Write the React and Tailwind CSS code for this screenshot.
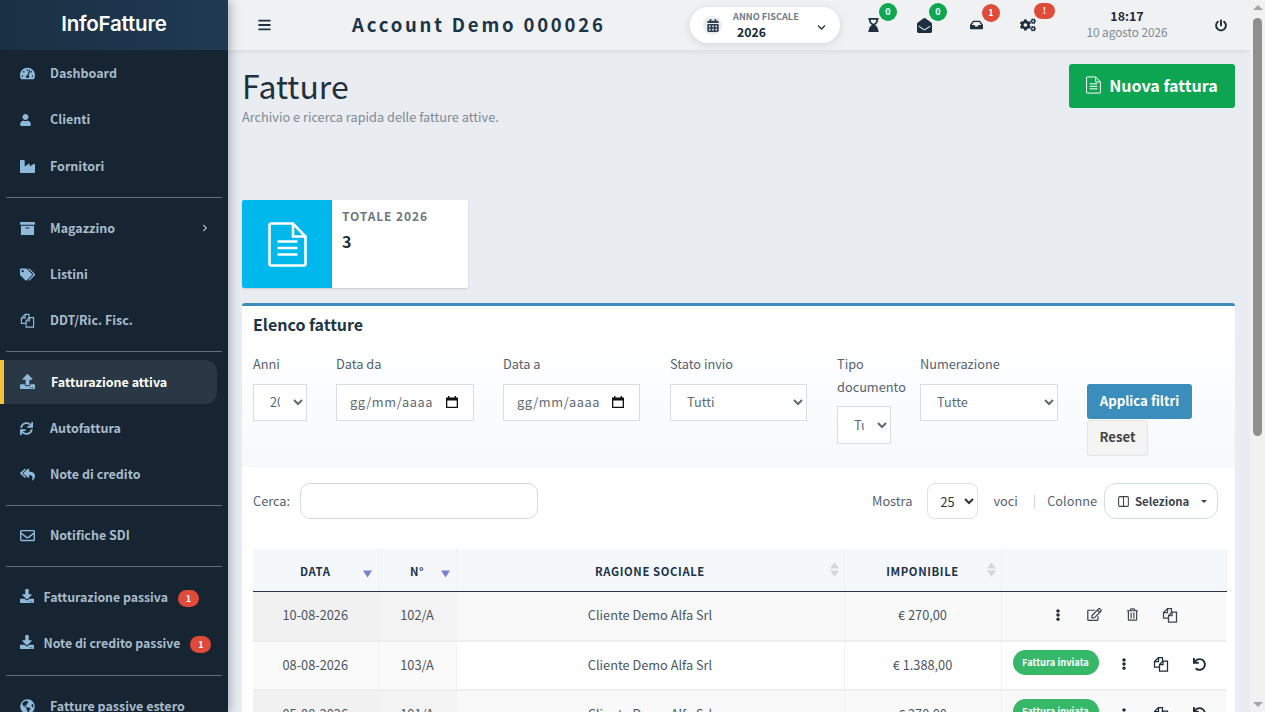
import {
  FaTachometerAlt, FaUser, FaIndustry, FaArchive, FaTags, FaUpload, FaSync, FaReplyAll, FaRegEnvelope,
  FaDownload, FaGlobeAmericas, FaBars, FaCalendarAlt, FaHourglassEnd, FaEnvelopeOpen, FaInbox, FaCogs,
  FaPowerOff, FaEllipsisV, FaRegEdit, FaRegTrashAlt, FaUndo, FaChevronDown, FaChevronRight,
} from "react-icons/fa";
import { Columns2 } from "lucide-react";

const FilesIcon = ({ className }) => (
  <svg viewBox="0 0 16 16" fill="none" stroke="currentColor" strokeWidth="1.25" className={className}>
    <path d="M6.5 11H1.5V5.5L5.5 1.5H9.5V5" />
    <path d="M5.5 1.5V5.5H1.5" />
    <path d="M10 5h4.5v10h-8V8.5L10 5z" />
    <path d="M10 5v3.5H6.5" />
  </svg>
);

const DocIcon = ({ className }) => (
  <svg viewBox="0 0 39 45" fill="none" stroke="currentColor" strokeWidth="2.6" className={className}>
    <path d="M3 1.5h22l12.5 13V42a1.5 1.5 0 0 1-1.5 1.5H3A1.5 1.5 0 0 1 1.5 42V3A1.5 1.5 0 0 1 3 1.5z" />
    <path d="M25 1.5V14.5H37.5" />
    <path d="M9.5 19.5h20M9.5 26h20M9.5 32.5h20" />
  </svg>
);

const CalendarIcon = () => (
  <svg viewBox="0 0 14 14" className="w-[14px] h-[14px] text-[#111]" fill="currentColor">
    <path d="M1 2.5h12V13H1V2.5zM2.3 5.5v6.2h9.4V5.5H2.3z" fillRule="evenodd" />
    <rect x="3" y="1" width="1.4" height="2" />
    <rect x="9.6" y="1" width="1.4" height="2" />
  </svg>
);

const SortDown = () => (
  <svg viewBox="0 0 10 8" className="absolute right-[6px] top-[21px] w-[9px] h-[8px] text-[#7b7fd6]" fill="currentColor">
    <path d="M0 0h10L5 8z" />
  </svg>
);

const SortBoth = () => (
  <svg viewBox="0 0 10 16" className="absolute right-[5px] top-[13px] w-[9px] h-[15px] text-[#d3d7db]" fill="currentColor">
    <path d="M5 0l5 7H0zM0 9h10l-5 7z" />
  </svg>
);

const Divider = () => <div className="h-px bg-[#5f7080] mx-[6px] my-[7.5px]" />;

const NavItem = ({ icon: Icon, label, chevron, iconClass = "w-[15px] h-[15px]", className = "" }) => (
  <div className={`h-[46.25px] flex items-center pl-5 pr-[19px] text-[#a8bccb] font-bold text-[12.5px] ${className}`}>
    <span className="w-[15px] shrink-0 flex">
      <Icon className={`${iconClass} text-[#8db9da]`} />
    </span>
    <span className="ml-[15px] flex-1 whitespace-nowrap">{label}</span>
    {chevron && <FaChevronRight className="w-[8px] h-[8px] text-[#a9bccb]" />}
  </div>
);

const BadgeItem = ({ label }) => (
  <div className="h-[46.25px] flex items-center pl-5 text-[#a8bccb] font-bold text-[12.3px]">
    <FaDownload className="w-[14px] h-[14px] text-[#8db9da] shrink-0 -mt-1" />
    <span className="ml-[9.5px] whitespace-nowrap pb-[2px]">{label}</span>
    <span className="ml-[10px] w-[21px] h-[17px] rounded-full bg-[#e04a38] text-white text-[9px] font-bold leading-[17px] text-center">1</span>
  </div>
);

const Sidebar = () => (
  <aside className="w-[228px] shrink-0 bg-[#172432] relative z-20 shadow-[2px_0_10px_rgba(30,45,60,0.35)] overflow-hidden">
    <div className="h-[50px] pb-[2px] mb-[0.4px] bg-gradient-to-r from-[#1a3044] to-[#1f3a53] flex items-center justify-center font-['Inter',sans-serif] font-semibold text-[20.5px] tracking-[-0.2px] text-white">
      InfoFatture
    </div>
    <NavItem icon={FaTachometerAlt} label="Dashboard" />
    <NavItem icon={FaUser} label="Clienti" iconClass="w-[11px] h-[12px]" className="[&_svg]:mt-[1px]" />
    <NavItem icon={FaIndustry} label="Fornitori" />
    <Divider />
    <NavItem icon={FaArchive} label="Magazzino" chevron />
    <NavItem icon={FaTags} label="Listini" />
    <NavItem icon={FilesIcon} label="DDT/Ric. Fisc." />
    <Divider />
    <div className="h-[44px] w-[217px] mt-px mb-[1.25px] flex items-center bg-[#2a3744] border-l-4 border-[#f5c13c] rounded-r-xl pl-4 text-white font-bold text-[12.5px]">
      <FaUpload className="w-[15px] h-[15px] text-[#8db9da] shrink-0" />
      <span className="ml-4">Fatturazione attiva</span>
    </div>
    <NavItem icon={FaSync} label="Autofattura" iconClass="w-[13px] h-[13px]" />
    <NavItem icon={FaReplyAll} label="Note di credito" />
    <Divider />
    <NavItem icon={FaRegEnvelope} label="Notifiche SDI" className="-mt-px" />
    <Divider />
    <BadgeItem label="Fatturazione passiva" />
    <BadgeItem label="Note di credito passive" />
    <Divider />
    <NavItem icon={FaGlobeAmericas} label="Fatture passive estero" />
  </aside>
);

const NotifyIcon = ({ icon: Icon, value, color, left, wide, size }) => (
  <div className={`relative flex items-center ${left}`}>
    <Icon className={`${size} text-[#1d2f40]`} />
    <span className={`absolute rounded-full text-white text-[9px] font-bold text-center ${color} ${wide ? "left-[14px] top-[-15px] w-[21px] h-[16px] leading-[16px]" : "left-[12px] top-[-15px] w-[18px] h-[18px] leading-[18px]"}`}>
      {value}
    </span>
  </div>
);

const TopBar = () => (
  <header className="h-[50px] shrink-0 bg-[#f0f1f2] flex items-center relative z-10 shadow-[0_1px_6px_rgba(60,75,90,0.12)]">
    <FaBars className="ml-[30px] w-[13px] h-[14px] text-[#1f3346]" />
    <div className="ml-[81px] w-[254px] whitespace-nowrap font-bold text-[18.5px] tracking-[2.8px] text-[#1c3448]">Account Demo 000026</div>
    <div className="ml-[84px] w-[150px] h-9 rounded-full bg-white shadow-[0_2px_8px_rgba(40,60,80,0.14)] flex items-center pl-[13px] pr-[14px]">
      <div className="w-[19px] h-[19px] rounded-full bg-[#e8eef3] flex items-center justify-center">
        <FaCalendarAlt className="w-[12px] h-[13px] text-[#33414f]" />
      </div>
      <div className="ml-[11px] flex-1">
        <div className="text-[9.2px] font-semibold leading-[14px] text-[#6f7d8a]">ANNO FISCALE</div>
        <div className="text-[12.3px] font-bold leading-[18px] text-[#1c2b39] pl-1">2026</div>
      </div>
      <FaChevronDown className="w-[9px] h-[9px] mt-[4px] text-[#2b3a48]" />
    </div>
    <NotifyIcon icon={FaHourglassEnd} value="0" color="bg-[#0ca750]" left="ml-[27px]" size="w-[13px] h-[14px]" />
    <NotifyIcon icon={FaEnvelopeOpen} value="0" color="bg-[#0ca750]" left="ml-[37px]" size="w-[15px] h-[15px]" />
    <NotifyIcon icon={FaInbox} value="1" color="bg-[#e04a38]" left="ml-[38px]" size="w-[13px] h-[12px]" />
    <NotifyIcon icon={FaCogs} value="!" color="bg-[#e04a38]" left="ml-[37px]" wide size="w-[16px] h-[14px]" />
    <div className="ml-[46px] w-[90px] -mt-[3px] text-center whitespace-nowrap">
      <div className="text-[12.4px] font-bold leading-[16px] text-[#1c2b39]">18:17</div>
      <div className="text-[11.75px] leading-[16px] text-[#7c8996]">10 agosto 2026</div>
    </div>
    <FaPowerOff className="ml-[43px] w-[12px] h-[13px] text-[#1d2b38]" />
  </header>
);

const FilterField = ({ label, className, children }) => (
  <div className={className}>
    <div className="text-[12.75px] leading-[23px] text-[#566270] mb-[9px]">{label}</div>
    {children}
  </div>
);

const inputClass = "h-[37px] w-full border border-[#d8dde2] bg-white text-[12.75px] text-[#5e6a75] pb-[2px]";

const FakeDate = () => (
  <div className={`${inputClass} flex items-center justify-between pl-[13px] pr-[14px] tracking-[0.6px]`}>
    <span>gg/mm/aaaa</span>
    <CalendarIcon />
  </div>
);

const Filters = () => (
  <div className="flex items-start h-[132px] pt-[17px] pl-[11px] bg-gradient-to-b from-white to-[#f6f9fc]">
    <FilterField label="Anni" className="w-[54px] mr-[29px]">
      <select className={`${inputClass} pl-3 pr-[10px]`} defaultValue="2026"><option>2026</option></select>
    </FilterField>
    <FilterField label="Data da" className="w-[138px] mr-[29px]"><FakeDate /></FilterField>
    <FilterField label="Data a" className="w-[137px] mr-[30px]"><FakeDate /></FilterField>
    <FilterField label="Stato invio" className="w-[137px] mr-[30px]">
      <select className={`${inputClass} pl-3`}><option>Tutti</option></select>
    </FilterField>
    <FilterField label="Tipo documento" className="w-[69px] mr-[14px]">
      <select className={`${inputClass} !w-[54px] pl-3 pr-[10px] -mt-px h-[38px]`}><option>Tutti</option></select>
    </FilterField>
    <FilterField label="Numerazione" className="w-[138px] mr-[29px]">
      <select className={`${inputClass} pl-3`}><option>Tutte</option></select>
    </FilterField>
    <div className="pt-[32px]">
      <div className="w-[105px] h-[35px] pb-[2px] rounded-[3px] bg-[#3b8dbc] text-white text-[13.2px] font-bold flex items-center justify-center">Applica filtri</div>
      <div className="mt-px w-[61px] h-9 pb-[2px] rounded-[3px] bg-[#f4f4f4] border border-[#e2e4e6] text-[#444] text-[13.2px] font-bold flex items-center justify-center">Reset</div>
    </div>
  </div>
);

const SearchRow = () => (
  <div className="flex items-center h-[36px] mt-[16px] pl-[11px] pr-[17px] text-[12.75px] text-[#566270]">
    <span>Cerca:</span>
    <div className="ml-[10px] w-[238px] h-9 rounded-[10px] border border-[#d5dbe1] bg-white" />
    <span className="ml-auto">Mostra</span>
    <select className="ml-[15px] w-[51px] h-9 rounded-lg border border-[#dde2e6] pl-2 text-[#333] bg-white"><option>25</option></select>
    <span className="ml-[15px]">voci</span>
    <span className="ml-[15px] text-[#c5ccd3]">|</span>
    <span className="ml-[11px]">Colonne</span>
    <div className="ml-[7px] w-[114px] h-9 rounded-xl border border-[#d5dde4] flex items-center pl-3 text-[#3a4550]">
      <Columns2 className="w-[13px] h-[13px]" />
      <span className="ml-[5px] mt-px text-[11.4px] font-bold">Seleziona</span>
      <span className="ml-[12px] w-0 h-0 border-x-[3px] border-x-transparent border-t-[3px] border-t-[#444]" />
    </div>
  </div>
);

const rows = [
  { date: "10-08-2026", num: "102/A", amount: "€ 270,00", sent: false },
  { date: "08-08-2026", num: "103/A", amount: "€ 1.388,00", sent: true },
  { date: "05-08-2026", num: "101/A", amount: "€ 270,00", sent: true },
];

const Actions = ({ sent }) =>
  sent ? (
    <div className="flex items-center pl-[11px] text-[#1d2b38]">
      <span className="w-[86px] h-[25px] -mt-[4px] rounded-full bg-[#37b868] text-white text-[9.3px] font-bold leading-[24px] text-center">Fattura inviata</span>
      <FaEllipsisV className="ml-[20px] w-[10px] h-[12px]" />
      <FilesIcon className="ml-[24px] w-[16px] h-[16px]" />
      <FaUndo className="ml-[24px] w-[13px] h-[13px]" />
    </div>
  ) : (
    <div className="flex items-center pl-[51px] text-[#39454f]">
      <FaEllipsisV className="w-[10px] h-[12px] text-[#1d2b38]" />
      <FaRegEdit className="ml-[24px] w-[15px] h-[13px]" />
      <FaRegTrashAlt className="ml-[25px] w-[11px] h-[13px]" />
      <FilesIcon className="ml-[24px] w-[16px] h-[16px]" />
    </div>
  );

const Th = ({ width, sort, children }) => (
  <th className={`${width} relative h-[42px] p-0 pt-[3px] text-center text-[11.3px] font-bold tracking-[0.6px] text-[#1c3448] border-r border-[#eef2f6] border-b border-b-[#2b3640]`}>
    {children}
    {sort === "down" ? <SortDown /> : sort === "both" ? <SortBoth /> : null}
  </th>
);

const Table = () => (
  <table className="ml-[11px] mt-[30px] w-[973px] table-fixed border-collapse text-[12.75px] text-[#4b5661]">
    <thead className="bg-[#f5f8fb]">
      <tr>
        <Th width="w-[125px]" sort="down">DATA</Th>
        <Th width="w-[78px]" sort="down">N°</Th>
        <Th width="w-[388px]" sort="both">RAGIONE SOCIALE</Th>
        <Th width="w-[157px]" sort="both">IMPONIBILE</Th>
        <Th width="w-[225px]" />
      </tr>
    </thead>
    <tbody>
      {rows.map((row, i) => {
        const odd = i % 2 === 0;
        return (
          <tr key={row.num} className={`h-[49.5px] border-b-2 border-[#eceef0] ${odd ? "bg-[#f9f9f9]" : "bg-white"}`}>
            <td className={`p-0 pb-[2px] text-center border-r border-[#f2f3f4] ${odd ? "bg-[#f1f1f1]" : "bg-[#fafafa]"}`}>{row.date}</td>
            <td className={`p-0 pb-[2px] text-center border-r border-[#f2f3f4] ${odd ? "bg-[#f3f3f3]" : "bg-[#fafafa]"}`}>{row.num}</td>
            <td className="p-0 pb-[2px] text-center border-r border-[#f2f3f4]">Cliente Demo Alfa Srl</td>
            <td className="p-0 pb-[2px] text-center border-r border-[#f2f3f4]">{row.amount}</td>
            <td className="p-0 pb-[2px]"><Actions sent={row.sent} /></td>
          </tr>
        );
      })}
    </tbody>
  </table>
);

const Scrollbar = () => (
  <div className="w-[15px] shrink-0 bg-[#f1f1f1] flex flex-col items-center relative z-30">
    <div className="mt-[5px] w-0 h-0 border-x-[5px] border-x-transparent border-b-[5px] border-b-[#a3a3a3]" />
    <div className="mt-[8px] w-[9px] h-[418px] rounded-[5px] bg-[#8f8f8f]" />
    <div className="mt-auto mb-[5px] w-0 h-0 border-x-[5px] border-x-transparent border-t-[5px] border-t-[#a3a3a3]" />
  </div>
);

export default function App() {
  return (
    <div className="h-screen flex overflow-hidden bg-[#e9edf3] font-['Noto_Sans_CJK_SC','Noto_Sans',sans-serif]">
      <Sidebar />
      <div className="flex-1 min-w-0 flex flex-col">
        <TopBar />
        <main className="flex-1 min-h-0 overflow-hidden pl-[14px] pr-[15px] bg-gradient-to-b from-[#e9edf2] to-[#e9edf3]">
          {/* Page heading */}
          <div className="flex justify-between h-[150px]">
            <div className="pt-[12px]">
              <h1 className="text-[32px] leading-[46px] text-[#24303b] font-normal">Fatture</h1>
              <p className="text-[12.75px] leading-[20px] mt-[-1px] text-[#7d8a96]">Archivio e ricerca rapida delle fatture attive.</p>
            </div>
            <div className="mt-[14px] w-[166px] h-[44px] pb-[2px] rounded-[3px] bg-[#0da551] text-white text-[16.1px] font-bold flex items-center justify-center">
              <DocIcon className="w-[15px] h-[18px] mr-[8px]" />
              Nuova fattura
            </div>
          </div>

          {/* Totale box */}
          <div className="flex w-[226px] h-[88px] rounded-[2px] bg-white shadow-[0_1px_2px_rgba(0,0,0,0.15)]">
            <div className="w-[90px] bg-[#00b8ec] rounded-l-[2px] flex items-center justify-center">
              <DocIcon className="w-[39px] h-[45px] text-white" />
            </div>
            <div className="pl-[10px] pt-[7px]">
              <div className="text-[12px] leading-[18px] font-bold tracking-[0.9px] text-[#6b7884]">TOTALE 2026</div>
              <div className="mt-[5px] text-[16px] leading-[22px] font-bold text-[#1f2b36]">3</div>
            </div>
          </div>

          {/* Elenco */}
          <section className="mt-[15px] bg-white border-t-[3px] border-[#3c8dbc] rounded-t-[3px]">
            <h2 className="pl-[11px] pt-[6px] h-[29px] text-[16px] leading-[24px] font-bold text-[#1c3448]">Elenco fatture</h2>
            <Filters />
            <SearchRow />
            <Table />
          </section>
        </main>
      </div>
      <Scrollbar />
    </div>
  );
}
